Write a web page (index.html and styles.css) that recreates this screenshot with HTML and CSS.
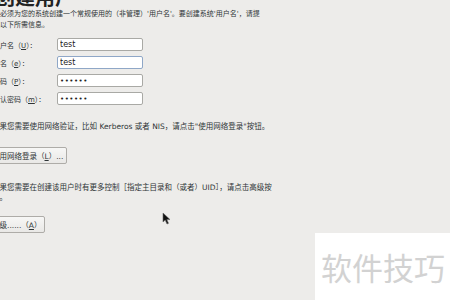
FILE: index.html
```html
<!DOCTYPE html>
<html lang="zh-CN">
<head>
    <meta charset="UTF-8">
    <title>创建用户</title>
    <link rel="stylesheet" href="styles.css">
</head>
<body>
    <div class="page">
        <h1 class="title">创建用户</h1>
        <p class="intro">您必须为您的系统创建一个常规使用的（非管理）'用户名'。要创建系统'用户名'，请提<br>供以下所需信息。</p>

        <div class="fields">
            <label for="username">用户名（<u>U</u>）：</label>
            <input type="text" id="username" value="test">
            <label for="fullname">全名（<u>e</u>）：</label>
            <input type="text" id="fullname" class="focused" value="test">
            <label for="password">密码（<u>P</u>）：</label>
            <input type="password" id="password" value="123456">
            <label for="confirm">确认密码（<u>m</u>）：</label>
            <input type="password" id="confirm" value="123456">
        </div>

        <p class="note">如果您需要使用网络验证，比如 Kerberos 或者 NIS，请点击"使用网络登录"按钮。</p>
        <button class="btn btn-network">使用网络登录（<u>L</u>）...</button>

        <p class="note note-adv">如果您需要在创建该用户时有更多控制［指定主目录和（或者）UID］，请点击高级按<br>钮。</p>
        <button class="btn btn-adv">高级......（<u>A</u>）</button>
    </div>

    <!-- 鼠标指针 -->
    <svg class="pointer" width="10" height="13" viewBox="0 0 10 13">
        <path d="M1 1 L1 10 L3.2 8 L5 12 L6.5 11.3 L4.8 7.6 L8 7.6 Z" fill="#111" stroke="#666" stroke-width="0.6"/>
    </svg>

    <div class="watermark">软件技巧</div>
</body>
</html>
```

FILE: styles.css
```css
body {
    margin: 0;
    background-color: #edecea;
    color: #2e3436;
    font-family: 'DejaVu Sans', 'Noto Sans CJK SC', sans-serif;
    width: 450px;
    height: 300px;
    overflow: hidden;
    position: relative;
}

.page {
    margin-left: -9px;
    margin-top: -13px;
}

.title {
    margin: 0 0 0 4px;
    font-size: 20px;
    line-height: 22px;
    font-weight: bold;
    color: #222;
}

.intro {
    margin: 0 0 0 2px;
    font-size: 7px;
    line-height: 11px;
}

.fields {
    display: grid;
    grid-template-columns: 66px 86px;
    row-gap: 5px;
    align-items: center;
    margin-top: 7px;
}

.fields label {
    font-size: 7px;
    padding-left: 2px;
}

.fields u,
.btn u {
    text-decoration: underline;
}

.fields input {
    height: 13px;
    box-sizing: border-box;
    border: 1px solid #a9a9a5;
    border-radius: 2px;
    background: #fff;
    padding: 0 2px;
    font-family: 'DejaVu Sans', sans-serif;
    font-size: 8px;
    color: #222;
    outline: none;
}

.fields input.focused {
    border-color: #8fa7c7;
}

.fields input[type="password"] {
    font-size: 7px;
    letter-spacing: 0.5px;
}

.note {
    margin: 17px 0 0 1px;
    font-size: 7.5px;
    line-height: 10px;
}

.note-adv {
    margin-top: 19px;
}

.btn {
    display: block;
    margin: 15px 0 0 -3px;
    padding: 0 3px;
    height: 17px;
    font-family: 'DejaVu Sans', 'Noto Sans CJK SC', sans-serif;
    font-size: 7.5px;
    color: #2e3436;
    background: linear-gradient(#f7f7f6, #e9e8e6);
    border: 1px solid #aeaca8;
    border-radius: 2px;
}

.btn-adv {
    margin-top: 13px;
}

.pointer {
    position: absolute;
    left: 162px;
    top: 212px;
}

.watermark {
    position: absolute;
    left: 315px;
    top: 233px;
    width: 135px;
    height: 67px;
    background: #fff;
    color: #d2d2d2;
    font-family: 'Noto Sans CJK SC', sans-serif;
    font-size: 31px;
    line-height: 67px;
    padding-left: 6px;
    box-sizing: border-box;
}
```
